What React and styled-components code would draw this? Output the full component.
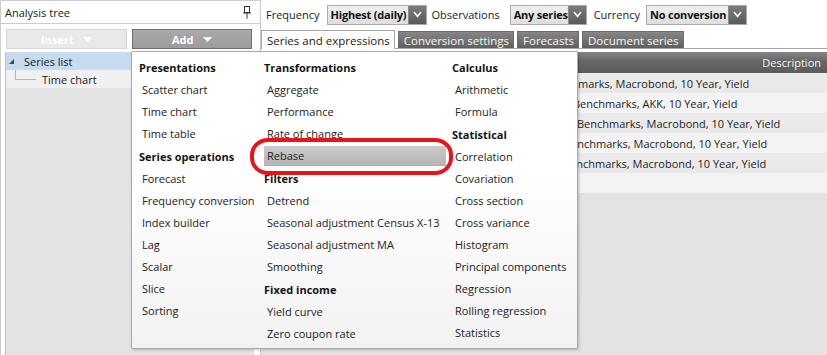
import React from "react";
import styled, { createGlobalStyle } from "styled-components";

const GlobalStyle = createGlobalStyle`
  html, body {
    margin: 0;
    padding: 0;
    background: #ffffff;
  }
  body {
    font-family: "Open Sans", "Noto Sans", sans-serif;
    font-size: 11px;
    color: #1e1e1e;
  }
`;

const Screen = styled.div`
  position: relative;
  width: 827px;
  height: 355px;
  display: flex;
  overflow: hidden;
  background: #ffffff;
`;

/* ---------- left: analysis tree ---------- */

const LeftPanel = styled.div`
  width: 260px;
  display: flex;
  flex-direction: column;
  border-right: 1px solid #c8c8c8;
  flex-shrink: 0;
`;

const PanelHeader = styled.div`
  height: 24px;
  box-sizing: border-box;
  border: 1px solid #cdcdcd;
  border-right: none;
  display: flex;
  align-items: center;
  justify-content: space-between;
  padding: 0 9px 0 4px;
  color: #1a1a1a;
`;

const ButtonRow = styled.div`
  display: flex;
  gap: 5px;
  padding: 5px 8px 3px 5px;
  border-left: 1px solid #cdcdcd;
`;

const ActionButton = styled.div`
  width: 121px;
  height: 20px;
  box-sizing: border-box;
  display: flex;
  align-items: center;
  justify-content: center;
  gap: 9px;
  font-weight: 700;
  color: #ffffff;
  background: ${(p) => (p.$disabled ? "#e9e9e9" : "linear-gradient(#aaaaaa, #9c9c9c)")};
  border: 1px solid ${(p) => (p.$disabled ? "#d6d6d6" : "#707070")};
`;

const Tree = styled.div`
  flex: 1;
  margin-right: 6px;
  border-left: 1px solid #cdcdcd;
  padding-left: 4px;
  background: #ffffff;
  display: flex;
  flex-direction: column;
`;

const TreeBody = styled.div`
  flex: 1;
  background: #e3e3e3;
  border-left: 1px solid #c2c2c2;
`;

const TreeRow = styled.div`
  height: 18px;
  display: flex;
  align-items: center;
  background: ${(p) => (p.$selected ? "#c7dbee" : "#f0f0f0")};
  padding-left: ${(p) => p.$indent}px;
  color: #1a1a1a;
`;

const Expander = styled.span`
  width: 0;
  height: 0;
  border-left: 5px solid transparent;
  border-bottom: 5px solid #4a4a4a;
  margin: 0 10px 0 2px;
`;

const Connector = styled.span`
  width: 20px;
  height: 9px;
  margin: -9px 6px 0 0;
  border-left: 1px solid #b4b4b4;
  border-bottom: 1px solid #b4b4b4;
`;

/* ---------- right: expressions ---------- */

const RightPanel = styled.div`
  flex: 1;
  display: flex;
  flex-direction: column;
`;

const Toolbar = styled.div`
  height: 29px;
  display: flex;
  align-items: center;
`;

const FieldLabel = styled.span`
  margin: 0 ${(p) => p.$after}px 0 ${(p) => p.$before}px;
  color: #1a1a1a;
  white-space: nowrap;
`;

const Dropdown = styled.div`
  width: ${(p) => p.$width}px;
  height: 20px;
  box-sizing: border-box;
  display: flex;
  align-items: center;
  border: 1px solid #ababab;
  background: linear-gradient(#efefef, #dedede);
  padding-left: 3px;
  flex-shrink: 0;
`;

const DropText = styled.span`
  flex: 1;
  overflow: hidden;
  white-space: nowrap;
  font-weight: 700;
  letter-spacing: -0.2px;
  color: #111111;
`;

const DropArrow = styled.span`
  width: 17px;
  height: 18px;
  display: flex;
  align-items: center;
  justify-content: center;
  background: linear-gradient(#7c7c7c, #5a5a5a);
  border-left: 1px solid #8d8d8d;
`;

const TabStrip = styled.div`
  height: 19px;
  display: flex;
  align-items: flex-end;
  gap: 3px;
  border-bottom: 1px solid #a4a4a4;
`;

const Tab = styled.div`
  height: ${(p) => (p.$active ? 19 : 17)}px;
  box-sizing: border-box;
  display: flex;
  align-items: center;
  white-space: nowrap;
  padding: 0 4px 0 5px;
  margin-bottom: ${(p) => (p.$active ? -1 : 0)}px;
  background: ${(p) => (p.$active ? "#ffffff" : "linear-gradient(#868686, #5f5f5f)")};
  color: ${(p) => (p.$active ? "#1a1a1a" : "#f4f4f4")};
  border: 1px solid ${(p) => (p.$active ? "#a4a4a4" : "#6c6c6c")};
  border-bottom: none;
  font-size: 11.5px;
`;

const Content = styled.div`
  flex: 1;
  margin-top: 3px;
  background: #e3e3e3;
  display: flex;
  flex-direction: column;
`;

const TableHeader = styled.div`
  height: 21px;
  display: flex;
  align-items: center;
  justify-content: flex-end;
  padding-right: 6px;
  background: linear-gradient(#858585, #666666 45%, #5c5c5c);
  color: #f6f6f6;
`;

const TableRow = styled.div`
  height: 20px;
  display: flex;
  align-items: center;
  white-space: nowrap;
  overflow: hidden;
  background: ${(p) => (p.$odd ? "#eaeaea" : "#f3f3f3")};
  padding-left: ${(p) => p.$indent || 0}px;
  color: #1e1e1e;
`;

/* ---------- the Add menu ---------- */

const Menu = styled.div`
  position: absolute;
  left: 131px;
  top: 51px;
  width: 447px;
  height: 298px;
  box-sizing: border-box;
  border: 1px solid #a9a9a9;
  border-radius: 2px;
  background: linear-gradient(#ffffff, #ffffff 40%, #f2f2f2);
  box-shadow: 1px 1px 3px rgba(0, 0, 0, 0.22);
  display: grid;
  grid-template-columns: 126px 188px 1fr;
  padding-top: 4px;
`;

const MenuColumn = styled.div`
  display: flex;
  flex-direction: column;
  padding-left: ${(p) => p.$pad}px;
`;

const MenuHeader = styled.div`
  height: 23px;
  display: flex;
  align-items: center;
  font-weight: 700;
  color: #141414;
`;

const MenuItem = styled.div`
  height: 22px;
  box-sizing: border-box;
  padding: 1px 0;
  color: #222222;
`;

const ItemFace = styled.div`
  height: 20px;
  box-sizing: border-box;
  display: flex;
  align-items: center;
  padding-left: 3px;
  background: ${(p) => (p.$active ? "linear-gradient(#cbcbcb, #b6b6b6)" : "transparent")};
  border-bottom: 1px solid ${(p) => (p.$active ? "#b0b0b0" : "transparent")};
`;

const Callout = styled.div`
  position: absolute;
  left: 118px;
  top: 86px;
  width: 203px;
  height: 37px;
  box-sizing: border-box;
  border: 4px solid #e8141c;
  border-radius: 18px / 17px;
  pointer-events: none;
`;

const PinIcon = () => (
  <svg width="8" height="13" viewBox="0 0 8 13">
    <rect x="1.5" y="0.5" width="5" height="6" fill="none" stroke="#333" />
    <line x1="0" y1="7" x2="8" y2="7" stroke="#333" />
    <line x1="4" y1="7" x2="4" y2="12.5" stroke="#333" />
  </svg>
);

const Caret = () => (
  <svg width="9" height="5" viewBox="0 0 9 5">
    <polygon points="0,0 9,0 4.5,5" fill="#ffffff" />
  </svg>
);

const Chevron = () => (
  <svg width="9" height="7" viewBox="0 0 9 7">
    <polyline points="1,1 4.5,5.5 8,1" fill="none" stroke="#ffffff" strokeWidth="1.6" />
  </svg>
);

const menu = [
  {
    pad: 7,
    entries: [
      ["h", "Presentations"],
      ["i", "Scatter chart"],
      ["i", "Time chart"],
      ["i", "Time table"],
      ["h", "Series operations"],
      ["i", "Forecast"],
      ["i", "Frequency conversion"],
      ["i", "Index builder"],
      ["i", "Lag"],
      ["i", "Scalar"],
      ["i", "Slice"],
      ["i", "Sorting"],
    ],
  },
  {
    pad: 6,
    entries: [
      ["h", "Transformations"],
      ["i", "Aggregate"],
      ["i", "Performance"],
      ["i", "Rate of change"],
      ["a", "Rebase"],
      ["h", "Filters"],
      ["i", "Detrend"],
      ["i", "Seasonal adjustment Census X-13"],
      ["i", "Seasonal adjustment MA"],
      ["i", "Smoothing"],
      ["h", "Fixed income"],
      ["i", "Yield curve"],
      ["i", "Zero coupon rate"],
    ],
  },
  {
    pad: 6,
    entries: [
      ["h", "Calculus"],
      ["i", "Arithmetic"],
      ["i", "Formula"],
      ["h", "Statistical"],
      ["i", "Correlation"],
      ["i", "Covariation"],
      ["i", "Cross section"],
      ["i", "Cross variance"],
      ["i", "Histogram"],
      ["i", "Principal components"],
      ["i", "Regression"],
      ["i", "Rolling regression"],
      ["i", "Statistics"],
    ],
  },
];

const rows = [
  { indent: 285, text: "Benchmarks, Macrobond, 10 Year, Yield" },
  { indent: 312, text: "Benchmarks, AKK, 10 Year, Yield" },
  { indent: 316, text: "Benchmarks, Macrobond, 10 Year, Yield" },
  { indent: 303, text: "Benchmarks, Macrobond, 10 Year, Yield" },
  { indent: 302, text: "Benchmarks, Macrobond, 10 Year, Yield" },
  { indent: 0, text: "" },
];

const Select = ({ width, value }) => (
  <Dropdown $width={width}>
    <DropText>{value}</DropText>
    <DropArrow>
      <Chevron />
    </DropArrow>
  </Dropdown>
);

const App = () => {
  return (
    <Screen>
      <GlobalStyle />
      <LeftPanel>
        <PanelHeader>
          <span>Analysis tree</span>
          <PinIcon />
        </PanelHeader>
        <ButtonRow>
          <ActionButton $disabled>
            Insert <Caret />
          </ActionButton>
          <ActionButton>
            Add <Caret />
          </ActionButton>
        </ButtonRow>
        <Tree>
          <TreeBody>
            <TreeRow $selected $indent={1}>
              <Expander />
              Series list
            </TreeRow>
            <TreeRow $indent={9}>
              <Connector />
              Time chart
            </TreeRow>
          </TreeBody>
        </Tree>
      </LeftPanel>

      <RightPanel>
        <Toolbar>
          <FieldLabel $before={5} $after={7}>Frequency</FieldLabel>
          <Select width={100} value="Highest (daily)" />
          <FieldLabel $before={5} $after={10}>Observations</FieldLabel>
          <Select width={77} value="Any series" />
          <FieldLabel $before={7} $after={6}>Currency</FieldLabel>
          <Select width={101} value="No conversion" />
        </Toolbar>
        <TabStrip>
          <Tab $active>Series and expressions</Tab>
          <Tab>Conversion settings</Tab>
          <Tab>Forecasts</Tab>
          <Tab>Document series</Tab>
        </TabStrip>
        <Content>
          <TableHeader>Description</TableHeader>
          {rows.map((r, i) => (
            <TableRow key={i} $odd={i % 2 === 0} $indent={r.indent}>
              {r.text}
            </TableRow>
          ))}
        </Content>
      </RightPanel>

      <Menu>
        {menu.map((col, ci) => (
          <MenuColumn key={ci} $pad={col.pad}>
            {col.entries.map(([kind, label]) =>
              kind === "h" ? (
                <MenuHeader key={label}>{label}</MenuHeader>
              ) : (
                <MenuItem key={label}>
                  <ItemFace $active={kind === "a"}>{label}</ItemFace>
                </MenuItem>
              )
            )}
          </MenuColumn>
        ))}
        <Callout />
      </Menu>
    </Screen>
  );
};

export default App;
